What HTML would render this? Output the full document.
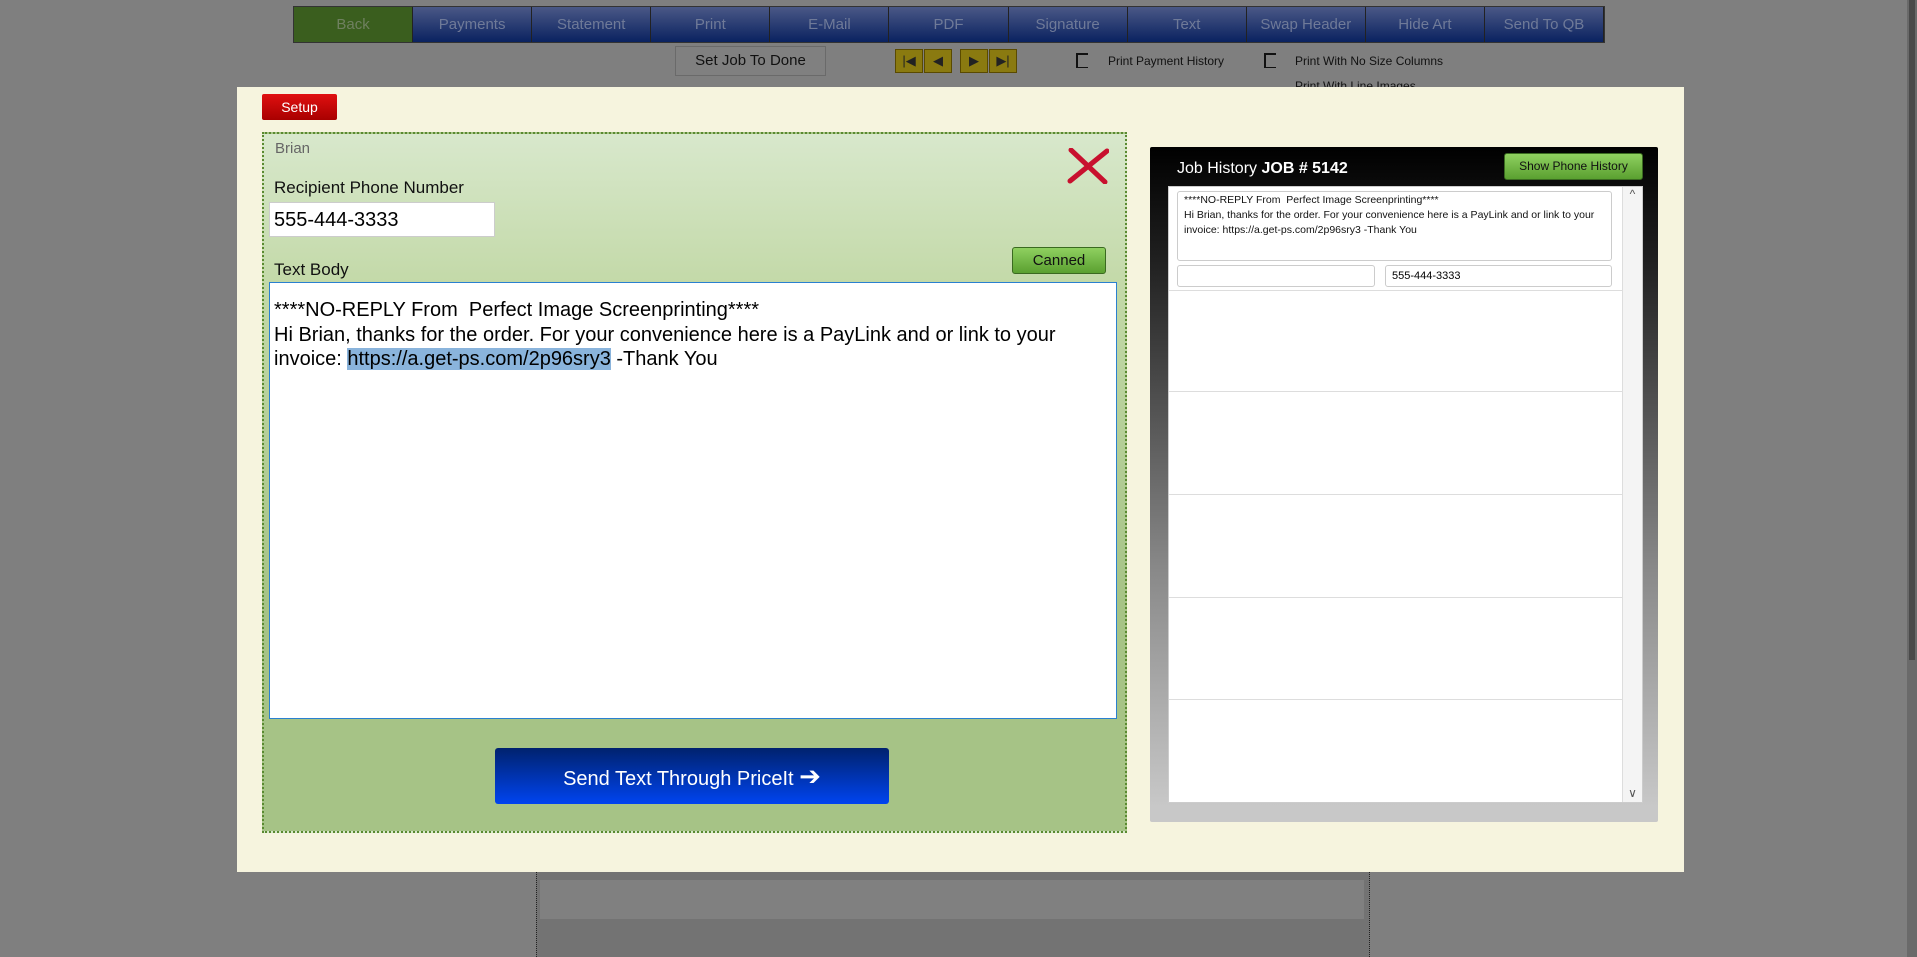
<!DOCTYPE html>
<html><head><meta charset="utf-8"><style>
*{box-sizing:border-box;margin:0;padding:0}
body{width:1917px;height:957px;background:#7f7f7f;position:relative;overflow:hidden;font-family:"Liberation Sans",sans-serif}
.abs{position:absolute}
.nav{left:293px;top:6px;width:1312px;height:37px;display:flex;border:1px solid #333}
.nav div{flex:1;border-right:1px solid #222;background:linear-gradient(#4a5886,#0a2260);color:#6f7a98;font-size:15px;text-align:center;line-height:36px}
.nav div:first-child{background:#3a5e1e;color:#6f8060}
.cb{width:12px;height:15px;border:2px solid #111;border-right:none;border-bottom-width:1px}
.lbl{font-size:12px;color:#111}
.modal{left:237px;top:87px;width:1447px;height:785px;background:#f6f4de}
.ar{position:absolute;top:49px;width:28px;height:24px;background:#8a7a10;border:1px solid #5a4a00;color:#222;font-size:13px;text-align:center;line-height:22px}
</style></head><body>
<div class="abs nav"><div>Back</div><div>Payments</div><div>Statement</div><div>Print</div><div>E-Mail</div><div>PDF</div><div>Signature</div><div>Text</div><div>Swap Header</div><div>Hide Art</div><div>Send To QB</div></div>
<div class="abs" style="left:675px;top:46px;width:151px;height:30px;border:1px solid #6a6a6a;background:#808080;font-size:15px;text-align:center;line-height:28px;color:#111">Set Job To Done</div>
<div class="ar" style="left:895px">|&#9664;</div><div class="ar" style="left:924px">&#9664;</div>
<div class="ar" style="left:960px">&#9654;</div><div class="ar" style="left:989px">&#9654;|</div>
<div class="abs cb" style="left:1076px;top:53px"></div><div class="abs lbl" style="left:1108px;top:54px">Print Payment History</div>
<div class="abs cb" style="left:1264px;top:53px"></div><div class="abs lbl" style="left:1295px;top:54px">Print With No Size Columns</div>
<div class="abs lbl" style="left:1295px;top:79px">Print With Line Images</div>
<div class="abs" style="left:1907px;top:0;width:10px;height:957px;background:#6a6a6a"><div style="height:660px;background:#4a4a4a;margin:0 2px"></div></div>
<div class="abs" style="left:536px;top:872px;width:834px;height:85px;background:#737373;border-left:1px dotted #222;border-right:1px dotted #222"></div>
<div class="abs" style="left:540px;top:880px;width:824px;height:39px;background:#808080"></div>
<div class="abs modal"></div>
<div class="abs" style="left:262px;top:94px;width:75px;height:26px;background:linear-gradient(#e01010,#a80000);border-radius:2px;color:#fff;font-size:14px;text-align:center;line-height:26px">Setup</div>
<div class="abs" style="left:262px;top:132px;width:865px;height:701px;border:2px dotted #5a8a30;background:linear-gradient(#d8e8cc 0,#c3d9a8 150px,#a6c386 470px,#a6c386)"></div>
<div class="abs" style="left:275px;top:140px;font-size:15px;color:#666">Brian</div>
<svg class="abs" style="left:1067px;top:148px" width="42" height="36" viewBox="0 0 42 36"><path d="M4 2 L38 34 M40 3 L3 33" stroke="#c8102e" stroke-width="5" stroke-linecap="round"/></svg>
<div class="abs" style="left:274px;top:178px;font-size:17px;color:#111">Recipient Phone Number</div>
<div class="abs" style="left:269px;top:202px;width:226px;height:35px;background:#fff;border:1px solid #ccc;font-size:20px;padding:6px 4px;color:#000">555-444-3333</div>
<div class="abs" style="left:274px;top:260px;font-size:17px;color:#111">Text Body</div>
<div class="abs" style="left:1012px;top:247px;width:94px;height:27px;background:linear-gradient(#8fd060,#5aa030);border:1px solid #3a6a20;border-radius:3px;font-size:15px;text-align:center;line-height:25px;color:#111">Canned</div>
<div class="abs" style="left:269px;top:282px;width:848px;height:437px;background:#fff;border:1px solid #2a80d0;font-size:20px;line-height:24.5px;padding:15px 4px;color:#000">****NO-REPLY From&nbsp; Perfect Image Screenprinting****<br>Hi Brian, thanks for the order. For your convenience here is a PayLink and or link to your invoice: <span style="background:#8ab4dc">https://a.get-ps.com/2p96sry3</span> -Thank You</div>
<div class="abs" style="left:495px;top:748px;width:394px;height:56px;background:linear-gradient(#00226e,#0044f0);border-radius:3px;color:#fff;font-size:20px;text-align:center;line-height:56px">Send Text Through PriceIt <span style="font-size:26px">&#x2794;</span></div>
<div class="abs" style="left:1150px;top:147px;width:508px;height:675px;background:linear-gradient(#000 0,#222 120px,#888 420px,#c8c8c8 660px);border-radius:2px"></div>
<div class="abs" style="left:1177px;top:160px;font-size:16px;color:#fff">Job History <b>JOB # 5142</b></div>
<div class="abs" style="left:1504px;top:153px;width:139px;height:27px;background:linear-gradient(#8fd060,#5aa030);border:1px solid #3a6a20;border-radius:3px;font-size:12px;text-align:center;line-height:25px;color:#111">Show Phone History</div>
<div class="abs" style="left:1168px;top:186px;width:475px;height:617px;background:#fff;border:1px solid #ccc">
<div class="abs" style="right:0;top:0;width:20px;height:615px;background:#f4f4f4;border-left:1px solid #ddd;font-size:12px;text-align:center;color:#555">^<div style="position:absolute;bottom:2px;width:100%">&#x2228;</div></div>
<div class="abs" style="left:8px;top:4px;width:435px;height:70px;border:1px solid #ccc;border-radius:3px;font-size:10.5px;line-height:15px;padding:1px 6px;color:#111">****NO-REPLY From&nbsp; Perfect Image Screenprinting****<br>Hi Brian, thanks for the order. For your convenience here is a PayLink and or link to your invoice: https://a.get-ps.com/2p96sry3 -Thank You</div>
<div class="abs" style="left:8px;top:78px;width:198px;height:22px;border:1px solid #ccc;border-radius:3px"></div>
<div class="abs" style="left:216px;top:78px;width:227px;height:22px;border:1px solid #ccc;border-radius:3px;font-size:11px;padding:4px 6px">555-444-3333</div>
<div class="abs" style="left:0;width:454px;top:103px;border-top:1px solid #ddd"></div>
<div class="abs" style="left:0;width:454px;top:204px;border-top:1px solid #ddd"></div>
<div class="abs" style="left:0;width:454px;top:307px;border-top:1px solid #ddd"></div>
<div class="abs" style="left:0;width:454px;top:410px;border-top:1px solid #ddd"></div>
<div class="abs" style="left:0;width:454px;top:512px;border-top:1px solid #ddd"></div>
</div>
</body></html>
